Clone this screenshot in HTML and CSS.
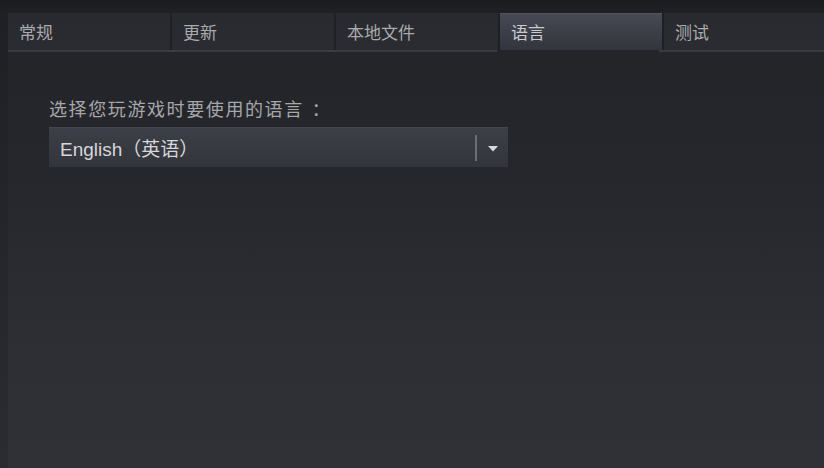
FILE: index.html
```html
<!DOCTYPE html>
<html lang="zh-CN">
<head>
<meta charset="utf-8">
<link rel="stylesheet" href="styles.css">
</head>
<body>
<div class="topstrip"></div>
<div class="window">
  <div class="edge"></div>
  <div class="main">
    <nav class="tabs">
      <div class="tab">常规</div>
      <div class="tab">更新</div>
      <div class="tab">本地文件</div>
      <div class="tab active">语言</div>
      <div class="tab">测试</div>
    </nav>
    <div class="tabline"></div>
    <section class="content">
      <div class="label">选择您玩游戏时要使用的语言<span class="colon">：</span></div>
      <div class="select">
        <span class="value">English（英语）</span>
        <span class="sep"></span>
        <span class="arrow"><svg width="10" height="6" viewBox="0 0 10 6"><path d="M0 0 H10 L5 5.5 Z" fill="#d8d9dc"/></svg></span>
      </div>
    </section>
  </div>
</div>
</body>
</html>
```
FILE: styles.css
```css
* { box-sizing: border-box; }
html, body { margin: 0; padding: 0; }
body {
  width: 824px;
  height: 468px;
  overflow: hidden;
  background: #1d1e22;
  font-family: "Noto Sans CJK SC", "Noto Sans", sans-serif;
  display: flex;
  flex-direction: column;
}
.topstrip {
  height: 13px;
  background: linear-gradient(#1a1b1f, #202125);
  flex: none;
}
.window {
  flex: 1;
  display: flex;
}
.edge {
  width: 8px;
  background: linear-gradient(#1f2024, #2a2c31);
  flex: none;
}
.main {
  flex: 1;
  display: flex;
  flex-direction: column;
  background: linear-gradient(#232428 0%, #26272c 35%, #2d2f35 75%, #2f3137 100%);
}
.tabs {
  display: flex;
  height: 37px;
  gap: 2px;
  background: #1f2024;
}
.tab {
  width: 162px;
  flex: none;
  background: linear-gradient(#292a2f, #2b2c31);
  color: #a9aaad;
  font-size: 17px;
  line-height: 37px;
  padding-left: 11px;
}
.tab:last-child { flex: 1; }
.tab.active {
  background: linear-gradient(#474a54 0%, #3d4049 45%, #33353c 100%);
  color: #c9cbd0;
  border-top: 1px solid #50535c;
  line-height: 35px;
}
.tabline {
  height: 2px;
  background: linear-gradient(90deg, #3a3c42 0 489px, transparent 489px 651px, #3a3c42 651px);
}
.content {
  padding: 44px 0 0 41px;
}
.label {
  color: #a6a7aa;
  font-size: 18px;
  line-height: 24px;
  letter-spacing: 1.6px;
}
.colon {
  margin-left: 8px;
}
.select {
  margin-top: 7px;
  width: 459px;
  height: 40px;
  display: flex;
  align-items: center;
  background: linear-gradient(#3c3f47, #33353c);
  border-top: 1px solid #43464e;
}
.value {
  flex: 1;
  padding-left: 11px;
  color: #d6d7da;
  font-size: 19px;
  font-family: "Liberation Sans", "Noto Sans CJK SC", sans-serif;
}
.sep {
  width: 2px;
  height: 26px;
  background: #6a6d74;
}
.arrow {
  width: 31px;
  display: flex;
  justify-content: center;
  padding-top: 2px;
}
```
